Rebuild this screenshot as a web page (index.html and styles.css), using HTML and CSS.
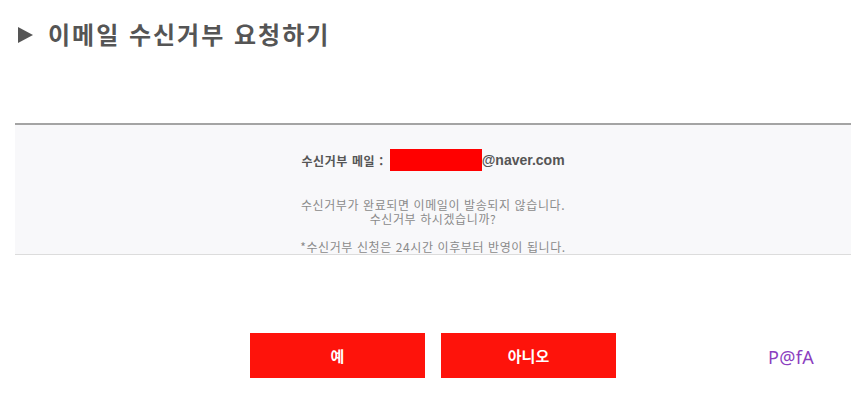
FILE: index.html
```html
<!DOCTYPE html>
<html lang="ko">
<head>
<meta charset="utf-8">
<link rel="stylesheet" href="styles.css">
</head>
<body>
<div class="page">
  <h1 class="title"><span class="tri"></span>이메일 수신거부 요청하기</h1>
  <div class="box">
    <div class="email-row">
      <span class="label">수신거부 메일 :</span>
      <span class="redact"></span>
      <span class="domain">@naver.com</span>
    </div>
    <p class="msg"><span class="line">수신거부가 완료되면 이메일이 발송되지 않습니다.</span><span class="line">수신거부 하시겠습니까?</span></p>
    <p class="note">*수신거부 신청은 24시간 이후부터 반영이 됩니다.</p>
  </div>
  <div class="actions">
    <button class="btn">예</button>
    <button class="btn">아니오</button>
    <span class="mark">P@fA</span>
  </div>
</div>
</body>
</html>
```
FILE: styles.css
```css
html, body {
  margin: 0;
  padding: 0;
  background: #fff;
}
body {
  font-family: "Noto Sans CJK KR", "Noto Sans", sans-serif;
}
.page {
  margin: 0 6px 0 15px;
  position: relative;
}
.title {
  margin: 0;
  height: 123px;
  box-sizing: border-box;
  padding-top: 17px;
  display: flex;
  align-items: flex-start;
  font-size: 24px;
  line-height: 34px;
  font-weight: 700;
  color: #555;
  letter-spacing: 2px;
}
.tri {
  width: 0;
  height: 0;
  border-top: 8px solid transparent;
  border-bottom: 8px solid transparent;
  border-left: 15px solid #555;
  margin: 10px 15px 0 3px;
}
.box {
  border-top: 2px solid #a4a4a4;
  border-bottom: 1px solid #dcdcdc;
  background: #f8f8fa;
  height: 132px;
  box-sizing: border-box;
  padding-top: 24px;
  text-align: center;
}
.email-row {
  display: flex;
  justify-content: center;
  align-items: center;
  height: 22px;
}
.label {
  font-size: 12px;
  font-weight: 700;
  color: #555;
  letter-spacing: 0.6px;
  margin-right: 6px;
}
.redact {
  width: 92px;
  height: 22px;
  background: #ff0000;
}
.domain {
  font-family: "Liberation Sans", Arial, sans-serif;
  font-size: 14px;
  font-weight: 700;
  color: #555;
}
.msg, .note {
  margin: 0;
  font-size: 12px;
  line-height: 14px;
  letter-spacing: 0.6px;
  color: #8a8a8a;
}
.msg {
  margin-top: 27px;
  display: flex;
  flex-direction: column;
  align-items: center;
}
.line {
  display: block;
  height: 14px;
}
.note {
  margin-top: 14px;
}
.actions {
  display: flex;
  justify-content: center;
  gap: 16px;
  margin-top: 78px;
}
.btn {
  width: 175px;
  height: 45px;
  border: 0;
  background: #fe130b;
  color: #fff;
  font-family: "Noto Sans CJK KR", sans-serif;
  font-size: 15px;
  font-weight: 700;
  padding: 0;
}
.mark {
  position: absolute;
  left: 753px;
  top: 345px;
  font-family: "Noto Sans", sans-serif;
  font-size: 18px;
  color: #8b3fbf;
  letter-spacing: 0.3px;
}
```
